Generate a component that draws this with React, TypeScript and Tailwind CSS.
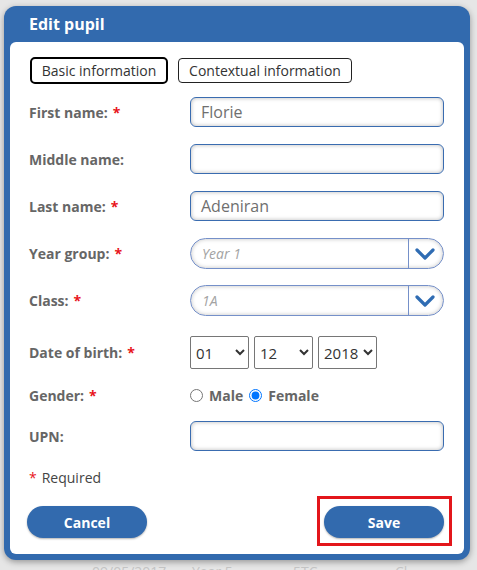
import React from 'react';

const font = { fontFamily: '"Open Sans", "Liberation Sans", sans-serif' };

const Req = () => <span className="text-[#e8141b] ml-[5px]">*</span>;

const Label = ({ text, required }: { text: string; required?: boolean }) => (
  <div className="w-[161px] shrink-0 text-[14px] font-bold text-[#666]">
    {text}
    {required && <Req />}
  </div>
);

const TextInput = ({ value }: { value?: string }) => (
  <div className="w-[254px] h-[30px] rounded-[6px] border border-[#3a6cb0] bg-white shadow-[inset_0_0_4px_rgba(0,0,0,0.28)] flex items-center px-[10px] text-[16px] text-[#6f6f6f]">
    {value}
  </div>
);

const Chevron = () => (
  <svg width="20" height="12" viewBox="0 0 20 12">
    <polyline points="2,2 10,10 18,2" fill="none" stroke="#2f6cb3" strokeWidth="3.2" strokeLinecap="round" strokeLinejoin="round" />
  </svg>
);

const PillSelect = ({ placeholder }: { placeholder: string }) => (
  <div className="w-[254px] h-[31px] rounded-full border border-[#7590c9] bg-white shadow-[inset_0_0_4px_rgba(0,0,0,0.25)] flex items-center overflow-hidden">
    <div className="flex-1 pl-[11px] text-[14px] italic text-[#a3a3a3]">{placeholder}</div>
    <div className="w-[35px] h-full border-l border-[#7590c9] flex items-center justify-center pr-[2px]">
      <Chevron />
    </div>
  </div>
);

const DateSelect = ({ value, options }: { value: string; options: string[] }) => (
  <select
    defaultValue={value}
    className="w-[59px] h-[33px] border border-[#767676] rounded-[2px] bg-white text-[15px] text-[#333] pl-[1px]"
  >
    {options.map(o => (
      <option key={o} value={o}>{o}</option>
    ))}
  </select>
);

export default function App() {
  return (
    <div className="w-[477px] h-[570px] overflow-hidden bg-[#e6e6e6]" style={font}>
      <div className="pt-[6px] pl-[4px]">
        <div className="w-[466px] bg-[#326aae] rounded-[12px] shadow-[0_2px_6px_rgba(0,0,0,0.35)] pb-[6px]">
          <div className="h-[36px] pl-[25px] flex items-center text-[16px] font-bold text-white">Edit pupil</div>
          <div className="mx-[6px] bg-white rounded-[6px] pl-[19px] pr-[20px] pt-[15px] pb-[16px]">
            <div className="flex items-center gap-[10px] pl-[1px]">
              <div className="w-[138px] h-[27px] border-2 border-black rounded-[5px] flex items-center justify-center text-[14px] text-[#333]">
                Basic information
              </div>
              <div className="w-[174px] h-[25px] border border-[#222] rounded-[4px] flex items-center justify-center text-[14px] text-[#333]">
                Contextual information
              </div>
            </div>

            <div className="flex items-center mt-[13px]">
              <Label text="First name:" required />
              <TextInput value="Florie" />
            </div>
            <div className="flex items-center mt-[17px]">
              <Label text="Middle name:" />
              <TextInput />
            </div>
            <div className="flex items-center mt-[17px]">
              <Label text="Last name:" required />
              <TextInput value="Adeniran" />
            </div>
            <div className="flex items-center mt-[17px]">
              <Label text="Year group:" required />
              <PillSelect placeholder="Year 1" />
            </div>
            <div className="flex items-center mt-[16px]">
              <Label text="Class:" required />
              <PillSelect placeholder="1A" />
            </div>
            <div className="flex items-center mt-[20px]">
              <Label text="Date of birth:" required />
              <div className="flex gap-[5px]">
                <DateSelect value="01" options={['01', '02', '03']} />
                <DateSelect value="12" options={['11', '12']} />
                <DateSelect value="2018" options={['2017', '2018', '2019']} />
              </div>
            </div>
            <div className="flex items-center mt-[16px] h-[20px]">
              <Label text="Gender:" required />
              <div className="flex items-center text-[14px] font-bold text-[#666]">
                <input type="radio" name="gender" className="m-0 w-[13px] h-[13px]" />
                <span className="ml-[6px]">Male</span>
                <input type="radio" name="gender" defaultChecked className="m-0 ml-[6px] w-[13px] h-[13px]" />
                <span className="ml-[6px]">Female</span>
              </div>
            </div>
            <div className="flex items-center mt-[16px]">
              <Label text="UPN:" />
              <TextInput />
            </div>

            <div className="mt-[16px] h-[20px] text-[14px] text-[#444] flex items-center">
              <span className="text-[#e8141b] mr-[5px]">*</span>Required
            </div>

            <div className="mt-[19px] flex justify-between items-center">
              <button className="w-[120px] h-[32px] rounded-full bg-[#326aae] text-white text-[14px] font-bold shadow-[0_1px_2px_rgba(0,0,0,0.3)] ml-[-2px]">
                Cancel
              </button>
              <div className="relative">
                <button className="w-[120px] h-[32px] rounded-full bg-[#326aae] text-white text-[14px] font-bold shadow-[0_1px_2px_rgba(0,0,0,0.3)]">
                  Save
                </button>
                <div className="absolute left-[-7px] right-[-8px] top-[-10px] bottom-[-8px] border-[3px] border-[#e3161b] pointer-events-none" />
              </div>
            </div>
          </div>
        </div>
      </div>
      <div className="flex mt-[1px] text-[14px] text-[#c4c4c4]">
        <span className="ml-[92px] w-[100px]">09/05/2017</span>
        <span className="w-[101px]">Year 5</span>
        <span className="w-[102px]">5TC</span>
        <span>Cl</span>
      </div>
    </div>
  );
}
